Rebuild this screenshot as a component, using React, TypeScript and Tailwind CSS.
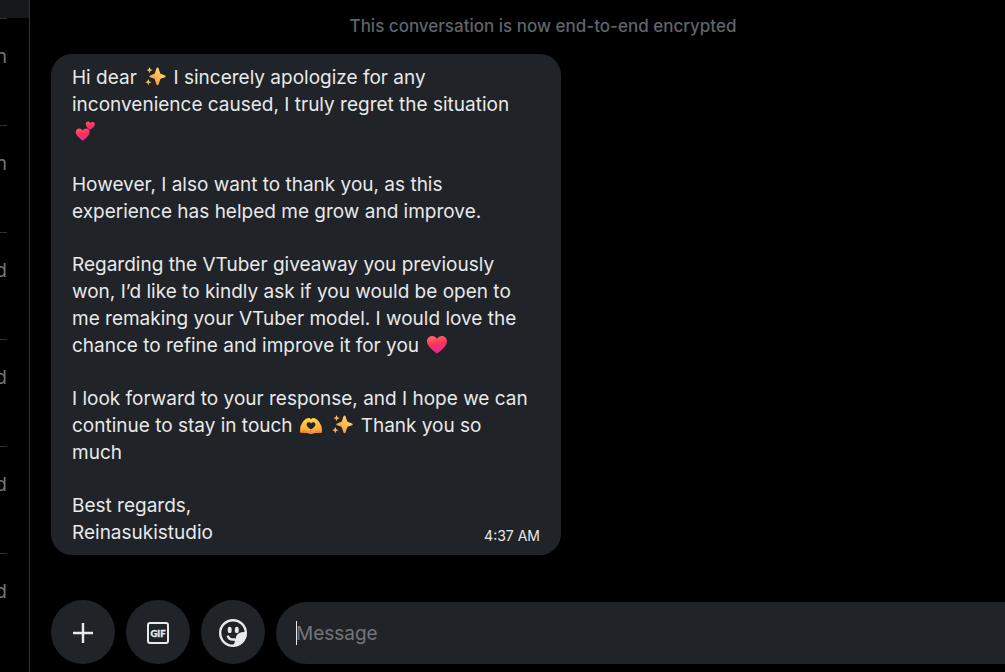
import React from 'react';

interface IconProps {
  className?: string;
}

const emojiClass = 'mx-[2px] inline-block h-[22px] w-[22px] align-[-4px]';

function Sparkles() {
  return (
    <svg viewBox="0 0 22 22" className={emojiClass} role="img" aria-label="sparkles">
      <defs>
        <linearGradient id="spark" x1="1" y1="0" x2="0" y2="1">
          <stop offset="0.2" stopColor="#ffd76a" />
          <stop offset="0.6" stopColor="#fdb04b" />
          <stop offset="1" stopColor="#f2766b" />
        </linearGradient>
      </defs>
      <g fill="url(#spark)">
        <path d="M13.500 1.500c.5 0 .8.3 1 .8l1.600 4.600c.2.600.5.900 1.100 1.100l3.800 1.400c.9.400.9 1.400 0 1.800l-3.800 1.400c-.6.200-.9.500-1.100 1.100l-1.600 4.900c-.3 1-1.700 1-2 0l-1.600-4.900c-.2-.6-.5-.9-1.100-1.100L6 11.200c-.9-.4-.9-1.400 0-1.800L9.800 8c.6-.2.9-.5 1.100-1.100l1.600-4.600c.2-.5.5-.8 1-.8z" />
        <path d="M5.500 1l.9 2.200 2.200.9-2.200.9-.9 2.300-.9-2.300-2.200-.9 2.200-.9z" />
        <path d="M4.300 13l.9 2.300 2.300.9-2.300.9-.9 2.400-.9-2.400-2.300-.9 2.300-.9z" />
      </g>
    </svg>
  );
}

const heartPath =
  'M11 19.500C8 17.500 1 12.500 1 7.300 1 4.300 3.200 2 6 2c2.200 0 4 1.200 5 3 1-1.800 2.800-3 5-3 2.800 0 5 2.300 5 5.300 0 5.200-7 10.200-10 12.200z';

function Heart() {
  return (
    <svg viewBox="0 0 22 22" className={emojiClass} role="img" aria-label="heart">
      <defs>
        <linearGradient id="heart" x1="0.3" y1="0" x2="0.6" y2="1">
          <stop offset="0.1" stopColor="#ff5d63" />
          <stop offset="0.5" stopColor="#f8315a" />
          <stop offset="1" stopColor="#e22aa8" />
        </linearGradient>
      </defs>
      <path d={heartPath} fill="url(#heart)" />
    </svg>
  );
}

function TwoHearts() {
  return (
    <svg viewBox="0 0 22 22" className={emojiClass} role="img" aria-label="two hearts">
      <defs>
        <linearGradient id="hearts" x1="0.3" y1="0" x2="0.6" y2="1">
          <stop offset="0.1" stopColor="#ff4f60" />
          <stop offset="0.5" stopColor="#f8315a" />
          <stop offset="1" stopColor="#e02bab" />
        </linearGradient>
      </defs>
      <path d={heartPath} fill="url(#hearts)" transform="translate(1 7) scale(0.7)" />
      <path d={heartPath} fill="url(#hearts)" transform="translate(11.500 0.500) rotate(4) scale(0.46)" />
    </svg>
  );
}

function HeartHands() {
  return (
    <svg viewBox="0 0 22 22" className={emojiClass} role="img" aria-label="heart hands">
      <defs>
        <linearGradient id="hands" x1="0" y1="0" x2="0" y2="1">
          <stop offset="0" stopColor="#ffd34c" />
          <stop offset="0.6" stopColor="#ffb83b" />
          <stop offset="1" stopColor="#f2873f" />
        </linearGradient>
      </defs>
      <path
        fill="url(#hands)"
        fillRule="evenodd"
        d="M.2 18.800c-.4-3.300-.1-6.300 1.600-9C3.400 6.500 5.800 4 8.300 4c1.200 0 2.200.4 2.700 1.200C11.500 4.400 12.500 4 13.700 4c2.500 0 4.900 2.500 6.500 5.800 1.700 2.700 2 5.700 1.600 9l-6.800.1-2.600.8c-.9.3-1.900.3-2.800 0L7 18.900zM11 15.300c2-1.100 4.400-2.900 4.400-4.900 0-1.200-.9-2.100-2.100-2.100-1 0-1.900.5-2.300 1.400-.4-.9-1.300-1.400-2.300-1.400-1.200 0-2.100.9-2.100 2.100 0 2 2.400 3.800 4.400 4.900z"
      />
      <path d="M11 16v3.200M2 17.500c1.500-.6 3.500-.6 5 .5M20 17.500c-1.500-.6-3.500-.6-5 .5" stroke="#e97a3d" strokeWidth="0.8" fill="none" />
    </svg>
  );
}

function PlusIcon({ className }: IconProps) {
  return (
    <svg viewBox="0 0 20 20" className={className} fill="none" stroke="currentColor" strokeWidth="2.400">
      <path d="M10 0v20M0 10h20" />
    </svg>
  );
}

function GifIcon({ className }: IconProps) {
  return (
    <svg viewBox="0 0 22 22" className={className} aria-hidden="true">
      <rect x="1" y="1" width="20" height="20" rx="2" fill="none" stroke="currentColor" strokeWidth="2" />
      <text
        x="11"
        y="14.500"
        textAnchor="middle"
        fill="currentColor"
        stroke="currentColor"
        strokeWidth="0.300"
        fontSize="9.500"
        fontWeight="900"
        fontFamily="Lato, sans-serif"
      >
        GIF
      </text>
    </svg>
  );
}

function StickerIcon({ className }: IconProps) {
  return (
    <svg viewBox="0 0 28 28" className={className} fill="none">
      <circle cx="14" cy="14" r="12.800" stroke="currentColor" strokeWidth="2.400" />
      <path
        d="M27.600 13.200c-4.500-.4-9.300.6-10.500 4.600-.4 1.400-.7 2.400-1.700 3.200 1 1.500.2 3.600-2.400 6 8.500.8 15.200-5.500 14.600-13.800z"
        fill="currentColor"
      />
      <ellipse cx="10.700" cy="10.900" rx="2" ry="3.200" fill="currentColor" />
      <ellipse cx="17.800" cy="10.900" rx="2" ry="3.200" fill="currentColor" />
      <path d="M8.600 16.600c.9 2.900 3.600 4.600 7.700 3.700" stroke="currentColor" strokeWidth="2.400" />
    </svg>
  );
}

const previews = ['n', 'n', 'd', 'd', 'd', 'd'];

function Sidebar() {
  return (
    <aside className="w-[30px] shrink-0 overflow-hidden border-r border-[#2f3336]">
      <div className="h-[18px] bg-[#16181c]" />
      <ul className="w-[7px]">
        {previews.map((text, i) => (
          <li
            key={i}
            className="flex h-[107px] justify-end border-t border-[#2f3336] pt-6 text-[19px] leading-[27px] text-[#71767b]"
          >
            {text}
          </li>
        ))}
      </ul>
    </aside>
  );
}

function Message() {
  return (
    <article className="flex w-[510px] max-w-full flex-col gap-[26px] rounded-[21px] bg-[#202327] px-[21px] pt-[10px] pb-[9px] text-[19px] leading-[27px] whitespace-nowrap text-[#e7e9ea]">
      <p>
        Hi dear <Sparkles /> I sincerely apologize for any
        <br />
        inconvenience caused, I truly regret the situation
        <br />
        <TwoHearts />
      </p>
      <p>
        However, I also want to thank you, as this
        <br />
        experience has helped me grow and improve.
      </p>
      <p>
        Regarding the VTuber giveaway you previously
        <br />
        won, I’d like to kindly ask if you would be open to
        <br />
        me remaking your VTuber model. I would love the
        <br />
        chance to refine and improve it for you <Heart />
      </p>
      <p>
        I look forward to your response, and I hope we can
        <br />
        continue to stay in touch <HeartHands /> <Sparkles /> Thank you so
        <br />
        much
      </p>
      <div className="flex items-end justify-between">
        <p>
          Best regards,
          <br />
          Reinasukistudio
        </p>
        <time className="text-sm">4:37 AM</time>
      </div>
    </article>
  );
}

const roundButton =
  'flex size-16 shrink-0 items-center justify-center rounded-full bg-[#202327] pt-px text-[#e7e9ea] hover:bg-[#2b2e33]';

function Composer() {
  return (
    <form className="flex items-end gap-[11px]" onSubmit={(e) => e.preventDefault()}>
      <button type="button" aria-label="Add" className={roundButton}>
        <PlusIcon className="size-5" />
      </button>
      <button type="button" aria-label="Add a GIF" className={roundButton}>
        <GifIcon className="size-[22px]" />
      </button>
      <button type="button" aria-label="Add a sticker" className={roundButton}>
        <StickerIcon className="size-7" />
      </button>
      <div className="relative min-w-0 flex-1">
        <input
          type="text"
          aria-label="Message"
          placeholder="Message"
          className="peer block h-[62px] w-full rounded-l-full bg-[#202327] px-5 text-[19px] text-[#e7e9ea] outline-none placeholder:text-[#71767b]"
        />
        {/* resting caret, the real one takes over on focus */}
        <span className="pointer-events-none absolute top-[19px] left-5 h-6 w-px bg-[#e7e9ea] peer-focus:hidden" />
      </div>
    </form>
  );
}

export default function App() {
  return (
    <div className="flex h-screen overflow-hidden bg-black font-['Inter',sans-serif]">
      <Sidebar />
      <main className="flex min-w-0 flex-1 flex-col pl-[21px]">
        <h2 className="pt-[13px] pb-[14px] pl-[30px] text-center text-[17px] leading-[27px] font-medium text-[#5f656b]">
          This conversation is now end-to-end encrypted
        </h2>
        <div className="flex-1">
          <Message />
        </div>
        <div className="pb-2">
          <Composer />
        </div>
      </main>
    </div>
  );
}
